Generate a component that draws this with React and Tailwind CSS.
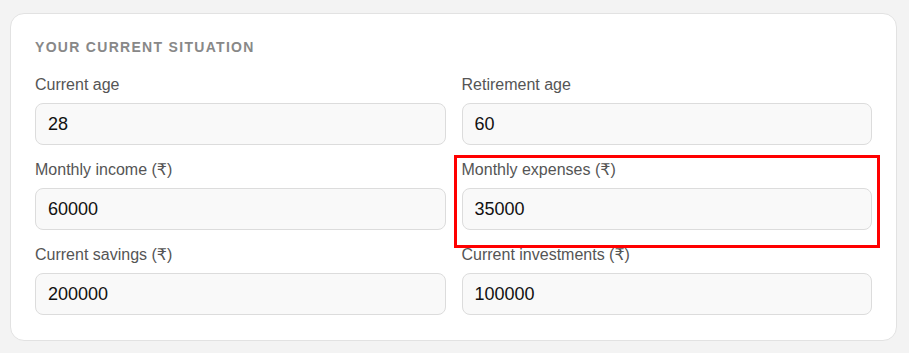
const fields = [
  { label: "Current age", value: "28" },
  { label: "Retirement age", value: "60" },
  { label: "Monthly income (₹)", value: "60000" },
  { label: "Monthly expenses (₹)", value: "35000", highlight: true },
  { label: "Current savings (₹)", value: "200000" },
  { label: "Current investments (₹)", value: "100000" },
];

const App = () => {
  return (
    <div
      className="min-h-[353px] bg-[#f3f3f3] pt-[13px] pl-[10px]"
      style={{ fontFamily: '"Liberation Sans", Arial, "DejaVu Sans", sans-serif' }}>
      <div className="w-[887px] rounded-[14px] border border-[#e2e2e2] bg-white px-6 pt-6 pb-[25px]">
        <h2 className="text-[14px] leading-[19px] font-bold tracking-[1.3px] text-[#888] uppercase">
          Your current situation
        </h2>
        <div className="mt-[18px] grid grid-cols-2 gap-x-4 gap-y-[15px]">
          {fields.map((field) => (
            <div key={field.label} className="relative">
              <label className="block text-[16px] leading-5 text-[#555]">
                {field.label}
              </label>
              <input
                readOnly
                value={field.value}
                className="mt-2 block h-[42px] w-full rounded-lg border border-[#dcdcdc] bg-[#f9f9f9] px-3 text-[18px] text-[#111] outline-none"
              />
              {field.highlight && (
                <div className="pointer-events-none absolute -top-[5px] -left-[8px] -right-[8px] -bottom-[18px] border-[3px] border-[#ff0000]" />
              )}
            </div>
          ))}
        </div>
      </div>
    </div>
  );
};

export default App;
